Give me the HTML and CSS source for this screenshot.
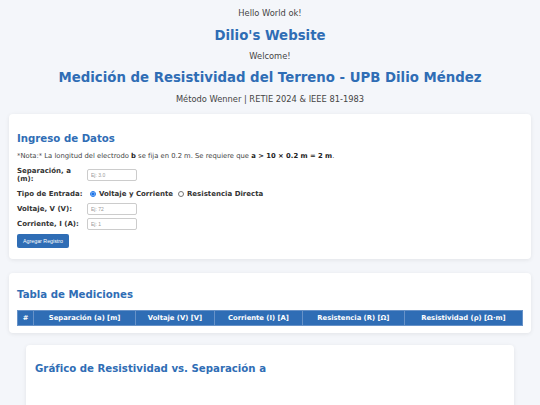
FILE: index.html
```html
<!DOCTYPE html>
<html lang="es">
<head>
    <meta charset="UTF-8">
    <meta name="viewport" content="width=device-width, initial-scale=1.0">
    <title>Resistividad del Terreno</title>
    <link rel="stylesheet" href="styles.css">
</head>
<body>
    <div class="page-header">
        <p class="hello">Hello World ok!</p>
        <h2 class="site-title">Dilio's Website</h2>
        <p class="welcome">Welcome!</p>
        <h1>Medición de Resistividad del Terreno - UPB Dilio Méndez</h1>
        <p class="subtitle">Método Wenner | RETIE 2024 &amp; IEEE 81-1983</p>
    </div>

    <div class="card input-card">
        <h2>Ingreso de Datos</h2>
        <p class="note">*Nota:* La longitud del electrodo <b>b</b> se fija en 0.2 m. Se requiere que <b>a &gt; 10 × 0.2 m = 2 m</b>.</p>

        <div class="form-row first-row">
            <label for="sep">Separación, a (m):</label>
            <input type="text" id="sep" placeholder="Ej: 3.0">
        </div>
        <div class="form-row">
            <label>Tipo de Entrada:</label>
            <span class="radio-group">
                <input type="radio" name="tipo" id="vi" checked>
                <label for="vi" class="radio-label">Voltaje y Corriente</label>
                <input type="radio" name="tipo" id="rd">
                <label for="rd" class="radio-label">Resistencia Directa</label>
            </span>
        </div>
        <div class="form-row">
            <label for="volt">Voltaje, V (V):</label>
            <input type="text" id="volt" placeholder="Ej: 72">
        </div>
        <div class="form-row">
            <label for="corr">Corriente, I (A):</label>
            <input type="text" id="corr" placeholder="Ej: 1">
        </div>

        <button class="btn">Agregar Registro</button>
    </div>

    <div class="card">
        <h2>Tabla de Mediciones</h2>
        <table>
            <thead>
                <tr>
                    <th>#</th>
                    <th>Separación (a) [m]</th>
                    <th>Voltaje (V) [V]</th>
                    <th>Corriente (I) [A]</th>
                    <th>Resistencia (R) [Ω]</th>
                    <th>Resistividad (ρ) [Ω·m]</th>
                </tr>
            </thead>
            <tbody></tbody>
        </table>
    </div>

    <div class="card chart-card">
        <h2>Gráfico de Resistividad vs. Separación a</h2>
    </div>
</body>
</html>
```

FILE: styles.css
```css
/* Page base */
body {
    margin: 0;
    padding: 8px 9px 0;
    background-color: #f4f6fa;
    font-family: Verdana, "DejaVu Sans", sans-serif;
    font-size: 8.3px;
    color: #444;
}

/* Header block */
.page-header {
    text-align: center;
}

.page-header p {
    margin: 0;
    line-height: 10px;
}

.site-title {
    margin: 10px 0 7px;
    font-size: 13.3px;
    line-height: 16px;
    color: #2f6db5;
}

h1 {
    margin: 9px 0 8px;
    font-size: 13.3px;
    line-height: 16px;
    color: #2f6db5;
}

/* Cards */
.card {
    background-color: #fff;
    border-radius: 4px;
    box-shadow: 0 1px 4px rgba(0, 0, 0, 0.08);
    padding: 8px 8px 7px;
    margin-top: 14px;
}

.input-card {
    margin-top: 10px;
    padding-bottom: 11px;
}

.card h2 {
    margin: 7px 0 8px;
    font-size: 10.2px;
    line-height: 14px;
    color: #2f6db5;
}

.input-card h2 {
    margin: 10px 0 5px;
}

.note {
    margin: 0 0 6px;
    font-size: 6.8px;
    line-height: 10px;
    color: #444;
}

.note b {
    color: #222;
}

/* Form rows */
.form-row {
    display: flex;
    align-items: center;
    min-height: 12px;
    margin-bottom: 3px;
    font-size: 7px;
    color: #333;
}

.first-row {
    margin-bottom: 5px;
}

.form-row > label {
    width: 66px;
    margin-right: 4px;
    font-weight: bold;
    line-height: 8px;
}

.form-row input[type="text"] {
    width: 50px;
    height: 12px;
    box-sizing: border-box;
    border: 1px solid #ccc;
    border-radius: 2px;
    padding: 0 3px;
    font-family: "Liberation Sans", Arial, sans-serif;
    font-size: 5px;
    margin: 0;
}

.form-row input::placeholder {
    color: #999;
}

.radio-group {
    display: flex;
    align-items: center;
}

.radio-group input {
    width: 6px;
    height: 6px;
    margin: 0 3px;
    accent-color: #1a73e8;
}

.radio-label {
    font-weight: bold;
    margin-right: 2px;
}

/* Button */
.btn {
    display: block;
    margin-top: 4px;
    height: 14px;
    padding: 0 6px;
    background-color: #2f6db5;
    color: #fff;
    border: none;
    border-radius: 2px;
    font-family: "Liberation Sans", Arial, sans-serif;
    font-size: 5.3px;
    cursor: pointer;
}

/* Table */
table {
    width: 100%;
    border-collapse: collapse;
    font-size: 6.8px;
}

th {
    background-color: #2f6db5;
    color: #fff;
    font-weight: bold;
    padding: 3px 3px;
    border: 1px solid #6792c8;
    line-height: 8px;
}

/* Chart card is narrower and centered */
.chart-card {
    max-width: 470px;
    margin: 12px auto 0;
    padding: 9px 9px 40px;
}

.chart-card h2 {
    margin-top: 8px;
}
```
